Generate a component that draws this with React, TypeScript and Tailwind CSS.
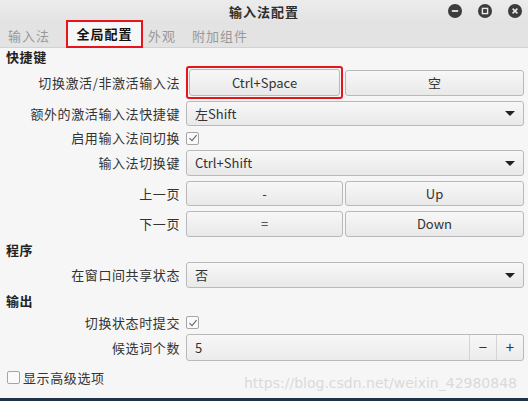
import React from 'react';

const font = { fontFamily: '"Noto Sans CJK SC", "Noto Sans", sans-serif' };

function Label({ children }: { children: React.ReactNode }) {
  return <div className="w-[180px] shrink-0 text-right text-[13px] tracking-[0.6px] text-[#333]">{children}</div>;
}

function Heading({ children, className = '' }: { children: React.ReactNode; className?: string }) {
  return <div className={`flex items-center pl-[6px] text-[13px] font-bold tracking-[0.6px] text-[#222] ${className}`}>{children}</div>;
}

function Btn({ children, className = '' }: { children: React.ReactNode; className?: string }) {
  return (
    <div className={`flex h-full items-center justify-center rounded-[3px] border border-[#b9b9b9] bg-gradient-to-b from-[#f7f7f7] to-[#e9e9e9] text-[13px] text-[#333] ${className}`}>
      {children}
    </div>
  );
}

function Combo({ value }: { value: string }) {
  return (
    <div className="flex h-full flex-1 items-center justify-between rounded-[3px] border border-[#b9b9b9] bg-gradient-to-b from-[#f7f7f7] to-[#e9e9e9] pl-[8px] pr-[8px] text-[13px] text-[#333]">
      <span>{value}</span>
      <span className="h-0 w-0 border-x-[5px] border-t-[5px] border-x-transparent border-t-[#222]" />
    </div>
  );
}

function Check({ checked }: { checked: boolean }) {
  return (
    <div className="flex h-[13px] w-[13px] items-center justify-center rounded-[2px] border border-[#a5a5a5] bg-[#fafafa]">
      {checked && (
        <svg width="10" height="10" viewBox="0 0 10 10">
          <path d="M1.5 5.2 L4 7.7 L8.6 2.2" fill="none" stroke="#666" strokeWidth="1.1" />
        </svg>
      )}
    </div>
  );
}

function WinBtn({ kind }: { kind: 'min' | 'max' | 'close' }) {
  return (
    <svg width="14" height="14" viewBox="0 0 14 14">
      <circle cx="7" cy="7" r="7" fill="#3c3c3c" />
      {kind === 'min' && <rect x="3.8" y="6.1" width="6.4" height="1.8" fill="#e8e8e8" />}
      {kind === 'max' && <rect x="4.4" y="4.4" width="5.2" height="5.2" fill="none" stroke="#e8e8e8" strokeWidth="1.4" />}
      {kind === 'close' && <path d="M4.6 4.6 L9.4 9.4 M9.4 4.6 L4.6 9.4" stroke="#e8e8e8" strokeWidth="1.6" />}
    </svg>
  );
}

export default function App() {
  return (
    <div className="relative flex h-[401px] w-[528px] flex-col overflow-hidden bg-[#f6f6f6]" style={font}>
      {/* title bar */}
      <div className="relative flex h-[24px] shrink-0 items-center justify-center bg-gradient-to-b from-[#ececec] to-[#e2e2e2]">
        <span className="text-[13px] font-bold tracking-[1px] text-[#2e2e2e]">输入法配置</span>
        <div className="absolute right-[6px] top-[4px] flex gap-[16px]">
          <WinBtn kind="min" />
          <WinBtn kind="max" />
          <WinBtn kind="close" />
        </div>
      </div>

      {/* tabs */}
      <div className="flex h-[24px] shrink-0 items-end border-b border-[#d2d2d2] bg-[#e3e3e3] text-[13px] tracking-[1px]">
        <div className="flex h-full items-center pl-[8px] text-[#999]">输入法</div>
        <div className="ml-[16px] flex h-[28px] w-[77px] translate-y-[1px] items-center justify-center border-2 border-[#e8141b] bg-[#f6f6f6] font-bold text-[#111]">
          全局配置
        </div>
        <div className="flex h-full items-center pl-[5px] text-[#999]">外观</div>
        <div className="flex h-full items-center pl-[16px] text-[#999]">附加组件</div>
      </div>

      <div className="flex flex-col pr-[4px]">
        <Heading className="h-[18px]">快捷键</Heading>

        <div className="flex h-[33px] items-center">
          <Label>切换激活/非激活输入法</Label>
          <div className="ml-[6px] flex h-full w-[157px] items-center justify-center rounded-[3px] border-2 border-[#e8141b] p-[1px]">
            <Btn className="w-full">Ctrl+Space</Btn>
          </div>
          <div className="ml-[2px] flex h-[26px] flex-1">
            <Btn className="w-full">空</Btn>
          </div>
        </div>

        <div className="mt-[2px] flex h-[25px] items-center">
          <Label>额外的激活输入法快捷键</Label>
          <div className="ml-[6px] flex h-full flex-1">
            <Combo value="左Shift" />
          </div>
        </div>

        <div className="flex h-[24px] items-center">
          <Label>启用输入法间切换</Label>
          <div className="ml-[6px]">
            <Check checked />
          </div>
        </div>

        <div className="flex h-[26px] items-center">
          <Label>输入法切换键</Label>
          <div className="ml-[6px] flex h-full flex-1">
            <Combo value="Ctrl+Shift" />
          </div>
        </div>

        <div className="mt-[5px] flex h-[25px] items-center">
          <Label>上一页</Label>
          <div className="ml-[6px] flex h-full flex-1 gap-[2px]">
            <Btn className="w-[157px]">-</Btn>
            <Btn className="flex-1">Up</Btn>
          </div>
        </div>

        <div className="mt-[5px] flex h-[26px] items-center">
          <Label>下一页</Label>
          <div className="ml-[6px] flex h-full flex-1 gap-[2px]">
            <Btn className="w-[157px]">=</Btn>
            <Btn className="flex-1">Down</Btn>
          </div>
        </div>

        <Heading className="h-[25px]">程序</Heading>

        <div className="flex h-[26px] items-center">
          <Label>在窗口间共享状态</Label>
          <div className="ml-[6px] flex h-full flex-1">
            <Combo value="否" />
          </div>
        </div>

        <Heading className="h-[26px]">输出</Heading>

        <div className="flex h-[17px] items-center">
          <Label>切换状态时提交</Label>
          <div className="ml-[6px]">
            <Check checked />
          </div>
        </div>

        <div className="mt-[3px] flex h-[27px] items-center">
          <Label>候选词个数</Label>
          <div className="ml-[6px] flex h-full flex-1 overflow-hidden rounded-[3px] border border-[#b9b9b9] bg-gradient-to-b from-[#f7f7f7] to-[#ececec] text-[13px] text-[#333]">
            <div className="flex flex-1 items-center pl-[8px]">5</div>
            <div className="flex w-[27px] items-center justify-center border-l border-[#d4d4d4] text-[15px]">−</div>
            <div className="flex w-[27px] items-center justify-center border-l border-[#d4d4d4] text-[15px]">+</div>
          </div>
        </div>

        <div className="relative flex h-[33px] items-center pl-[7px]">
          <Check checked={false} />
          <span className="ml-[3px] text-[13px] tracking-[0.6px] text-[#333]">显示高级选项</span>
          <span className="absolute right-[7px] top-[12px] text-[14px] text-[#dadada]" style={{ fontFamily: '"DejaVu Sans", sans-serif' }}>
            https://blog.csdn.net/weixin_42980848
          </span>
        </div>
      </div>

      <div className="absolute bottom-0 left-0 h-[3px] w-full bg-[#1f3347]" />
    </div>
  );
}
